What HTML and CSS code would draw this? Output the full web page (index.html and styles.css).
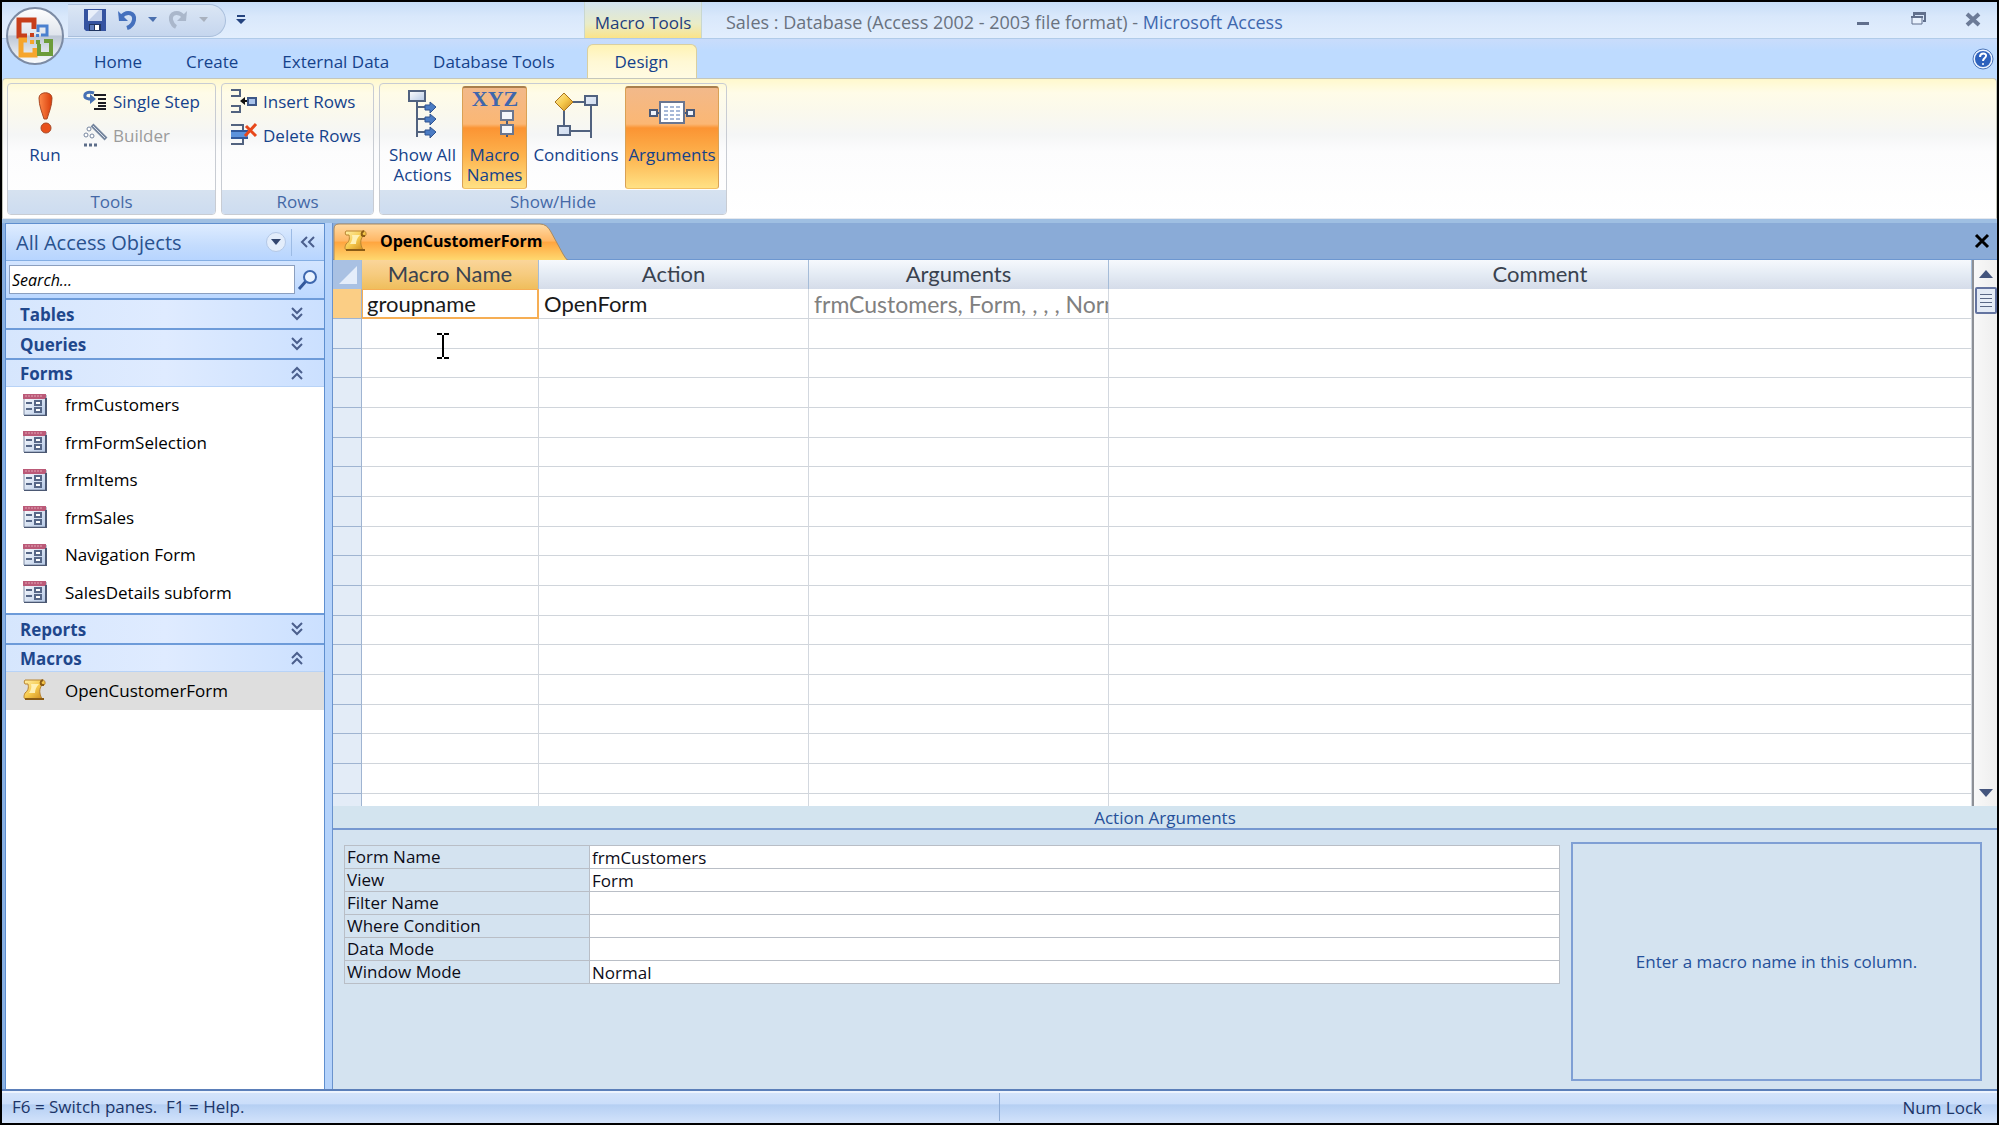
FILE: index.html
```html
<!DOCTYPE html>
<html lang="en">
<head>
    <meta charset="UTF-8">
    <title>Sales : Database - Microsoft Access</title>
    <link rel="stylesheet" href="styles.css">
</head>
<body>
    <!-- shared shapes -->
    <svg class="defs" width="0" height="0">
        <defs>
            <linearGradient id="gBlue" x1="0" y1="0" x2="1" y2="1"><stop offset="0" stop-color="#fff"/><stop offset="1" stop-color="#b4c8e6"/></linearGradient>
            <linearGradient id="gGold" x1="0" y1="0" x2="1" y2="1"><stop offset="0" stop-color="#fff0a8"/><stop offset=".5" stop-color="#f6c94c"/><stop offset="1" stop-color="#c98316"/></linearGradient>
            <linearGradient id="gOrb" x1="0" y1="0" x2="0" y2="1"><stop offset="0" stop-color="#fff"/><stop offset=".48" stop-color="#dfe4ec"/><stop offset=".5" stop-color="#bcc6d5"/><stop offset="1" stop-color="#fdfeff"/></linearGradient>
            <linearGradient id="gRun" x1="0" y1="0" x2="1" y2="0"><stop offset="0" stop-color="#ff8a4a"/><stop offset="1" stop-color="#d83c0a"/></linearGradient>
        </defs>
        <symbol id="form" viewBox="0 0 24 22">
            <path d="M1 1h22v20H1z" fill="url(#gBlue)" stroke="#7f8ca5" stroke-width="1"/>
            <path d="M0 0h23v5H0z" fill="#bb5a78"/><path d="M2 2h18" stroke="#e2a5b6" stroke-dasharray="2 1"/>
            <path d="M23 4v18H1" fill="none" stroke="#4b5873" stroke-width="2"/>
            <path d="M3 9h6M3 15h6" stroke="#566787" stroke-width="2"/>
            <path d="M12 7h6v4h-6zM12 14h6v4h-6z" fill="#fff" stroke="#566787" stroke-width="2"/>
        </symbol>
        <symbol id="scroll" viewBox="0 0 24 24">
            <path d="M2 2h18c2 0 3 4 1 5h-2c-3 4-3 8 0 14H3c-3 0-2-4-1-6 3-2 4-5 3-9H2c-1-1-1-3 0-4z" fill="url(#gGold)" stroke="#b98430" stroke-width="1"/>
            <path d="M20 2c-3 1-3 4-1 5h2" fill="none" stroke="#8a5c16" stroke-width="2"/>
            <path d="M2 21h19" fill="none" stroke="#8a5c16" stroke-width="2"/>
            <path d="M8 6h8c-3 3-4 6-4 9H6c2-3 3-6 2-9z" fill="#fff0b4"/>
        </symbol>
        <symbol id="down" viewBox="0 0 14 14"><path d="M2 1l5 5 5-5M2 7l5 5 5-5" fill="none" stroke="#4b5f8d" stroke-width="2"/></symbol>
        <symbol id="up" viewBox="0 0 14 14"><path d="M2 7l5-5 5 5M2 13l5-5 5 5" fill="none" stroke="#4b5f8d" stroke-width="2"/></symbol>
    </svg>

    <div class="window">
        <header class="titlebar">
            <div class="quick">
                <button aria-label="Save"><svg width="22" height="22" viewBox="0 0 22 22"><path d="M0 0h22v22H2l-2-2z" fill="#3553a0"/><path d="M4 1h14v11H4z" fill="#e9effa"/><path d="M15 1h3v11H4z" fill="#c3d0ea"/><path d="M5 15h12v7H5z" fill="#20345f"/><path d="M11 16h4v5h-4z" fill="#fff"/><path d="M6 16h4v5H6z" fill="#5f7cbd"/></svg></button>
                <button aria-label="Undo"><svg width="20" height="20" viewBox="0 0 20 20"><path d="M4 7c6-7 14-4 13 3-1 5-4 7-7 8" fill="none" stroke="#4470bd" stroke-width="4"/><path d="M1 1l1 10h9z" fill="#4470bd"/></svg></button>
                <button aria-label="Undo list"><svg width="9" height="6"><path d="M0 0h9L5 5z" fill="#4a6fae"/></svg></button>
                <button aria-label="Redo"><svg width="20" height="20" viewBox="0 0 20 20"><path d="M16 7C10 0 2 3 3 10c1 4 3 6 5 7" fill="none" stroke="#aab7cb" stroke-width="4"/><path d="M19 1l-1 10H9z" fill="#aab7cb"/></svg></button>
                <button aria-label="Redo list"><svg width="9" height="6"><path d="M0 0h9L5 5z" fill="#a9b1be"/></svg></button>
            </div>
            <button class="customize" aria-label="Customize"><svg width="10" height="10"><path d="M1 0h8v2H1zM0 4h10L5 9z" fill="#24437f"/></svg></button>
            <div class="context">Macro Tools</div>
            <h1>Sales : Database (Access 2002 - 2003 file format) - <span>Microsoft Access</span></h1>
            <div class="controls">
                <button aria-label="Minimize"><svg width="16" height="16"><path d="M2 10h12v3H2z" fill="#606f8c"/></svg></button>
                <button aria-label="Restore"><svg width="16" height="16"><path d="M4 4V1h11v8h-2M4 2h11" fill="none" stroke="#606f8c" stroke-width="2"/><path d="M2 5h10v7H2z" fill="#e8f1fd" stroke="#606f8c"/><path d="M1 4h12v2H1z" fill="#606f8c"/></svg></button>
                <button aria-label="Close"><svg width="16" height="16"><path d="M2 2l12 11M14 2L2 13" stroke="#6c7b97" stroke-width="4"/></svg></button>
            </div>
        </header>

        <nav class="tabs">
            <button>Home</button>
            <button>Create</button>
            <button>External Data</button>
            <button>Database Tools</button>
            <button class="active">Design</button>
            <button class="help" aria-label="Help"><svg width="24" height="24" viewBox="0 0 24 24"><circle cx="12" cy="12" r="10" fill="#eef5ff" stroke="#4b74b8" stroke-width="1"/><circle cx="12" cy="12" r="8" fill="#2e62bd"/><path d="M9 10c0-5 7-4 6-1 0 2-3 2-3 5" fill="none" stroke="#fff" stroke-width="2"/><circle cx="12" cy="17" r="1" fill="#fff"/></svg></button>
        </nav>

        <button class="orb" aria-label="Office Button">
            <svg width="60" height="60" viewBox="0 0 60 60">
                <circle cx="30" cy="30" r="28" fill="url(#gOrb)" stroke="#7c8ba4" stroke-width="2"/>
                <path d="M22 30h-8V14h15v9" fill="none" stroke="#c73e1b" stroke-width="5"/>
                <path d="M33 26v-6h9v9h-6" fill="none" stroke="#4a80cf" stroke-width="3"/>
                <path d="M22 34h-6v15h14v-7" fill="none" stroke="#f6a52c" stroke-width="5"/>
                <path d="M34 38v10h12V35h-7" fill="none" stroke="#6d9c3a" stroke-width="4"/>
                <path d="M25 27h4v4h-4z" fill="#c73e1b"/><path d="M31 28h3v3h-3z" fill="#4a80cf"/><path d="M25 34h4v4h-4z" fill="#f6a52c"/><path d="M31 34h4v4h-4z" fill="#6d9c3a"/>
            </svg>
        </button>

        <section class="ribbon">
            <div class="group tools">
                <div class="group-body">
                    <button class="big run"><svg width="40" height="50" viewBox="0 0 40 50"><path d="M14 9c0-7 13-7 13 0 0 8-3 14-5 21h-3c-2-7-5-13-5-21z" fill="url(#gRun)" stroke="#a94a26"/><circle cx="21" cy="39" r="5" fill="#e9511b" stroke="#a94a26"/></svg>Run</button>
                    <div class="stack">
                        <button><svg width="24" height="20" viewBox="0 0 24 20"><path d="M11 2C5 0 1 2 2 6c1 2 4 2 7 2" fill="none" stroke="#4670b4" stroke-width="3"/><path d="M7 3v10l6-5z" fill="#4670b4"/><path d="M11 4h12M15 8h8M15 12h8M15 15h8M11 18h12" stroke="#1c1c24" stroke-width="2"/></svg>Single Step</button>
                        <button disabled><svg width="24" height="24" viewBox="0 0 24 24"><path d="M9 2l14 14" stroke="#76869f" stroke-width="4"/><path d="M10 3l12 12" stroke="#d7dee9" stroke-width="1"/><g fill="#fff" stroke="#76869f"><circle cx="6" cy="6" r="2"/><circle cx="3" cy="12" r="2"/><circle cx="9" cy="13" r="2"/></g><path d="M1 22h3M6 22h3M11 22h3" stroke="#5c6d89" stroke-width="3"/></svg>Builder</button>
                    </div>
                </div>
                <h2>Tools</h2>
            </div>
            <div class="group rows">
                <div class="group-body">
                    <div class="stack">
                        <button><svg width="26" height="24" viewBox="0 0 26 24"><path d="M0 1h9v6H0M0 17h9v6H0" fill="none" stroke="#51627f" stroke-width="2"/><path d="M17 9h8v7h-8z" fill="#a9c3ea" stroke="#3d5787" stroke-width="2"/><path d="M11 12h5" stroke="#111" stroke-width="2"/><path d="M9 12l5-4v8z" fill="#111"/></svg>Insert Rows</button>
                        <button><svg width="26" height="24" viewBox="0 0 26 24"><path d="M0 2h12v6M0 21h12v-5" fill="none" stroke="#51627f" stroke-width="2"/><path d="M0 8h17v7H0z" fill="#5c92dc"/><path d="M0 8h17M0 15h17" stroke="#31589b" stroke-width="2"/><path d="M15 3l10 10M25 1L14 13" stroke="#e8481b" stroke-width="3"/></svg>Delete Rows</button>
                    </div>
                </div>
                <h2>Rows</h2>
            </div>
            <div class="group show">
                <div class="group-body">
                    <button class="big all"><svg width="40" height="50" viewBox="0 0 40 50"><path d="M14 12v36M14 18h12M14 30h12M14 43h12" fill="none" stroke="#51627f" stroke-width="2"/><path d="M6 2h16v10H6z" fill="url(#gBlue)" stroke="#51627f" stroke-width="2"/><path d="M22 16h5v-3l6 5-6 6v-3h-5zM22 28h5v-3l6 5-6 6v-3h-5zM22 41h5v-3l6 5-6 6v-3h-5z" fill="#4b7cc4" stroke="#2f538f"/></svg>Show All Actions</button>
                    <button class="big names pressed"><svg width="50" height="50" viewBox="0 0 50 50"><text x="25" y="17" text-anchor="middle" class="xyz">XYZ</text><path d="M37 28v20" stroke="#4a5a78" stroke-width="2"/><path d="M31 22h12v9H31zM31 36h12v9H31z" fill="#f4f6fb" stroke="#6a7690" stroke-width="2"/></svg>Macro Names</button>
                    <button class="big cond"><svg width="50" height="50" viewBox="0 0 50 50"><path d="M13 20v22h27M20 13h20v36" fill="none" stroke="#51627f" stroke-width="2"/><path d="M13 4l9 9-9 9-9-9z" fill="url(#gGold)" stroke="#a8741c" stroke-width="1"/><path d="M34 7h12v9H34zM7 37h12v9H7z" fill="url(#gBlue)" stroke="#51627f" stroke-width="2"/></svg>Conditions</button>
                    <button class="big args pressed"><svg width="50" height="50" viewBox="0 0 50 50"><path d="M4 24h42" stroke="#4a5a78" stroke-width="2"/><path d="M3 21h7v6H3zM40 21h7v6h-7z" fill="#eef3fb" stroke="#4a5a78" stroke-width="2"/><path d="M13 13h24v21H13z" fill="#fff" stroke="#6a7690" stroke-width="2"/><path d="M17 18h17M17 22h17M17 26h17M17 30h17" stroke="#4f72b0" stroke-dasharray="4 2"/></svg>Arguments</button>
                </div>
                <h2>Show/Hide</h2>
            </div>
        </section>

        <main>
            <aside class="nav-pane">
                <div class="nav-title">
                    <h2>All Access Objects</h2>
                    <button class="filter" aria-label="Filter"><svg width="10" height="6"><path d="M0 0h10L5 6z" fill="#33466f"/></svg></button>
                    <button class="collapse" aria-label="Collapse"><svg width="14" height="12"><path d="M6 1L1 6l5 5M13 1L8 6l5 5" fill="none" stroke="#4b5f8d" stroke-width="2"/></svg></button>
                </div>
                <div class="search">
                    <input type="text" placeholder="Search..." aria-label="Search">
                    <button aria-label="Find"><svg width="20" height="20"><path d="M1 19l8-9" stroke="#33589b" stroke-width="3"/><circle cx="12" cy="7" r="6" fill="#eaf3ff" stroke="#3d67ae" stroke-width="2"/></svg></button>
                </div>
                <button class="section">Tables<svg width="14" height="14"><use href="#down"/></svg></button>
                <button class="section">Queries<svg width="14" height="14"><use href="#down"/></svg></button>
                <button class="section open">Forms<svg width="14" height="14"><use href="#up"/></svg></button>
                <ul>
                    <li><svg width="24" height="22"><use href="#form"/></svg>frmCustomers</li>
                    <li><svg width="24" height="22"><use href="#form"/></svg>frmFormSelection</li>
                    <li><svg width="24" height="22"><use href="#form"/></svg>frmItems</li>
                    <li><svg width="24" height="22"><use href="#form"/></svg>frmSales</li>
                    <li><svg width="24" height="22"><use href="#form"/></svg>Navigation Form</li>
                    <li><svg width="24" height="22"><use href="#form"/></svg>SalesDetails subform</li>
                </ul>
                <button class="section">Reports<svg width="14" height="14"><use href="#down"/></svg></button>
                <button class="section open">Macros<svg width="14" height="14"><use href="#up"/></svg></button>
                <ul>
                    <li class="selected"><svg width="24" height="24"><use href="#scroll"/></svg>OpenCustomerForm</li>
                </ul>
            </aside>

            <section class="document">
                <div class="doc-tabs">
                    <button class="doc-tab">
                        <svg class="tab-shape" width="236" height="38" viewBox="0 0 236 38">
                            <defs><linearGradient id="gTab" x1="0" y1="0" x2="0" y2="1"><stop offset="0" stop-color="#ffdba6"/><stop offset=".45" stop-color="#ffb765"/><stop offset=".5" stop-color="#ffa640"/><stop offset="1" stop-color="#ffdb72"/></linearGradient></defs>
                            <path d="M1 38V6q0-5 5-5h201q7 0 11 8l12 22q3 6 6 7z" fill="url(#gTab)" stroke="#a98a60" stroke-width="1"/>
                        </svg>
                        <svg width="24" height="24"><use href="#scroll"/></svg>
                        <span>OpenCustomerForm</span>
                    </button>
                    <button class="doc-close" aria-label="Close document"><svg width="14" height="12"><path d="M1 0l12 12M13 0L1 12" stroke="#000" stroke-width="3"/></svg></button>
                </div>

                <div class="grid-wrap">
                    <div class="grid">
                        <table>
                            <thead>
                                <tr>
                                    <th class="corner"><svg width="18" height="18"><path d="M18 0v18H0z" fill="#e4edfa"/></svg></th>
                                    <th class="name current">Macro Name</th>
                                    <th class="action">Action</th>
                                    <th class="arguments">Arguments</th>
                                    <th>Comment</th>
                                </tr>
                            </thead>
                            <tbody id="macro-rows">
                                <tr>
                                    <td class="current"></td>
                                    <td class="editing"><input type="text" value="groupname" aria-label="Macro Name"></td>
                                    <td>OpenForm</td>
                                    <td class="muted">frmCustomers, Form, , , , Normal</td>
                                    <td></td>
                                </tr>
                            </tbody>
                        </table>
                        <svg class="cursor" width="12" height="26"><path d="M0 1h5M7 1h5M0 25h5M7 25h5M6 2v22" stroke="#000" stroke-width="2"/></svg>
                    </div>
                    <div class="scrollbar">
                        <button aria-label="Scroll up"><svg width="14" height="8"><path d="M7 0l7 8H0z" fill="#44557d"/></svg></button>
                        <div class="thumb"></div>
                        <button class="last" aria-label="Scroll down"><svg width="14" height="8"><path d="M0 0h14L7 8z" fill="#44557d"/></svg></button>
                    </div>
                </div>

                <h3>Action Arguments</h3>
                <div class="props">
                    <table>
                        <tr><th><label for="form-name">Form Name</label></th><td><input id="form-name" value="frmCustomers"></td></tr>
                        <tr><th><label for="view">View</label></th><td><input id="view" value="Form"></td></tr>
                        <tr><th><label for="filter-name">Filter Name</label></th><td><input id="filter-name"></td></tr>
                        <tr><th><label for="where">Where Condition</label></th><td><input id="where"></td></tr>
                        <tr><th><label for="data-mode">Data Mode</label></th><td><input id="data-mode"></td></tr>
                        <tr><th><label for="window-mode">Window Mode</label></th><td><input id="window-mode" value="Normal"></td></tr>
                    </table>
                    <p class="hint">Enter a macro name in this column.</p>
                </div>
            </section>
        </main>

        <footer>
            <span class="keys">F6 = Switch panes. &nbsp;F1 = Help.</span>
            <span class="lock">Num Lock</span>
        </footer>
    </div>

    <script>
        // blank rows under the first macro
        const rows = document.getElementById('macro-rows');
        for (let i = 0; i < 17; i++) {
            const tr = document.createElement('tr');
            tr.innerHTML = '<td></td><td></td><td></td><td></td><td></td>';
            rows.appendChild(tr);
        }
    </script>
</body>
</html>
```
FILE: styles.css
```css
* {
    box-sizing: border-box;
}

body {
    margin: 0;
    background: #000;
    font-family: "Open Sans", "Noto Sans", sans-serif;
    font-size: 17px;
    color: #15428b;
}

button, input {
    font: inherit;
    color: inherit;
    background: none;
    border: none;
    padding: 0;
    margin: 0;
}

button {
    display: flex;
    align-items: center;
    justify-content: center;
    white-space: nowrap;
}

svg {
    display: block;
    flex: none;
    overflow: visible;
}

h1, h2, h3, p, ul {
    margin: 0;
    padding: 0;
    font-weight: normal;
}

.defs {
    position: absolute;
}

.window {
    position: relative;
    display: flex;
    flex-direction: column;
    height: 100vh;
    border: 2px solid #000;
    background: #bfdbff;
}

/* title bar */
.titlebar {
    display: flex;
    align-items: center;
    height: 37px;
    padding-left: 66px;
    background: linear-gradient(#c7ddf7, #d9e8fb 40%, #e2eefd);
    border-bottom: 1px solid #b0cbe9;
}

.quick {
    display: flex;
    align-items: center;
    width: 158px;
    height: 33px;
    padding-left: 16px;
    border: 1px solid #a9bedb;
    border-left: none;
    border-radius: 0 17px 17px 0;
    background: linear-gradient(#dbe6f5, #c5d6ee);
}

.quick button {
    margin-right: 11px;
}

.customize {
    width: 30px;
}

.context {
    width: 118px;
    height: 100%;
    margin-left: 328px;
    padding-top: 4px;
    line-height: 34px;
    text-align: center;
    color: #1e3d7b;
    border: 1px solid #c9d7cf;
    border-width: 0 1px;
    background: linear-gradient(#d3e3ef, #e9ecc8 60%, #fbe388);
}

h1 {
    flex: 1;
    margin-left: 24px;
    padding-top: 3px;
    font-size: 18px;
    color: #69727f;
    white-space: nowrap;
}

h1 span {
    color: #3f68ae;
}

.controls {
    display: flex;
    gap: 39px;
    padding-right: 16px;
}

.orb {
    position: absolute;
    left: 3px;
    top: 4px;
}

/* ribbon tabs */
.tabs {
    display: flex;
    align-items: flex-end;
    height: 39px;
    padding-left: 70px;
    background: linear-gradient(#c9dcfb, #bedbff 30%);
}

.tabs button {
    height: 34px;
    padding: 0 22px;
}

.tabs .active {
    width: 110px;
    margin-left: 10px;
    border: 1px solid #d9cfa0;
    border-bottom: none;
    border-radius: 6px 6px 0 0;
    background: linear-gradient(#fff3b4, #fff8d4 50%, #fffbe3);
}

.tabs .help {
    margin-left: auto;
    padding: 0 2px;
    height: 38px;
}

/* ribbon */
.ribbon {
    display: flex;
    gap: 5px;
    height: 141px;
    padding: 4px 4px 3px;
    border: 1px solid #c4c6bc;
    border-bottom-color: #e4e8ee;
    border-radius: 4px 4px 0 0;
    background: linear-gradient(#fff8cc, #fffce8 10%, #fbf9ec 22%, #f5f6f6 40%, #fcfcfd 52%, #fff);
}

.group {
    display: flex;
    flex-direction: column;
    border: 1px solid #c8ccd3;
    border-radius: 4px;
    overflow: hidden;
}

.tools {
    width: 209px;
}

.rows {
    width: 153px;
}

.show {
    width: 348px;
}

.group-body {
    display: flex;
    flex: 1;
    padding: 0 3px;
}

.group h2 {
    height: 24px;
    line-height: 24px;
    font-size: 17px;
    text-align: center;
    color: #4468a6;
    background: linear-gradient(#d6e2f0, #cddcf0);
}

.big {
    flex-direction: column;
    justify-content: flex-start;
    height: 103px;
    margin-top: 2px;
    padding: 2px 0 0;
    gap: 6px;
    line-height: 20px;
    white-space: normal;
    border: 1px solid transparent;
    border-radius: 3px;
}

.run {
    width: 68px;
}

.all {
    width: 79px;
}

.names {
    width: 65px;
}

.cond {
    width: 98px;
}

.args {
    width: 94px;
}

.pressed {
    border-color: #a97f4c #d9a155 #f3c063;
    border-top-width: 2px;
    padding-top: 1px;
    background: linear-gradient(#f2b98a, #fbb774 36%, #fb9433 40%, #fdb34e 68%, #ffe184);
}

.xyz {
    font: bold 22px "Liberation Serif", serif;
    fill: #3f66ac;
}

.stack {
    display: flex;
    flex-direction: column;
    align-items: flex-start;
    padding-left: 4px;
}

.stack button {
    height: 34px;
    gap: 6px;
}

.rows .stack {
    padding-left: 6px;
}

button:disabled {
    color: #9b9b9b;
}

/* main area */
main {
    display: flex;
    flex: 1;
    min-height: 0;
    padding-left: 3px;
    border-top: 4px solid #9fbfe2;
    border-bottom: 2px solid #5b7fb9;
    background: linear-gradient(90deg, #84acdf, #b5d3fb 1%);
}

.nav-pane {
    width: 320px;
    border: 1px solid #5f8fcf;
    border-bottom: none;
    background: #fff;
    overflow: hidden;
}

.nav-title {
    display: flex;
    align-items: center;
    height: 37px;
    padding-left: 10px;
    border-bottom: 1px solid #84aee3;
    background: linear-gradient(#deecff, #c4dcfd 60%, #b7d5ff);
}

.nav-title h2 {
    flex: 1;
    font-size: 20px;
    color: #29528f;
}

.filter {
    width: 20px;
    height: 20px;
    border: 1px solid #b4c8e6;
    border-radius: 10px;
    background: #e3edfb;
}

.collapse {
    width: 33px;
    height: 27px;
    margin-left: 5px;
    border-left: 1px solid #9cbbe5;
}

.search {
    display: flex;
    gap: 3px;
    height: 37px;
    padding: 4px 3px;
    background: linear-gradient(#d3e5ff, #bcd8ff);
}

.search input {
    width: 286px;
    height: 29px;
    padding-left: 2px;
    border: 1px solid #8b9fbf;
    background: #fff;
    color: #000;
    font-size: 16px;
    font-style: italic;
}

.search input::placeholder {
    color: #000;
    opacity: 1;
}

.section {
    justify-content: space-between;
    width: 100%;
    height: 30px;
    padding: 0 20px 0 14px;
    font-weight: bold;
    color: #1f478c;
    border-top: 2px solid #6d9bd9;
    background: linear-gradient(90deg, #d6e6fd, #dfebff 50%, #cbe0ff);
}

.section.open {
    height: 29px;
    border-bottom: 1px solid #b8d3f7;
}

.nav-pane ul {
    list-style: none;
    padding-bottom: 1px;
}

.nav-pane li {
    display: flex;
    align-items: center;
    gap: 18px;
    height: 37px;
    padding: 0 0 2px 17px;
    color: #000;
}

.nav-pane li:nth-child(even), .nav-pane .selected {
    height: 38px;
}

.nav-pane .selected {
    background: #dedede;
}

/* document */
.document {
    display: flex;
    flex: 1;
    flex-direction: column;
    min-width: 0;
    margin-left: 7px;
    border-left: 1px solid #6a93cd;
    background: #d4e3f0;
}

.doc-tabs {
    display: flex;
    justify-content: space-between;
    height: 37px;
    border-bottom: 1px solid #6d97d0;
    background: #8aabd7;
}

.doc-tab {
    position: relative;
    justify-content: flex-start;
    gap: 12px;
    width: 236px;
    padding-left: 11px;
    font-weight: bold;
    font-size: 16px;
    color: #000;
}

.doc-tab > * {
    position: relative;
}

.doc-tab .tab-shape {
    position: absolute;
    left: 0;
    top: 0;
}

.doc-close {
    width: 30px;
}

.grid-wrap {
    display: flex;
    flex: 1;
    min-height: 0;
}

.grid {
    position: relative;
    flex: 1;
    overflow: hidden;
    background: #fff;
}

.grid table {
    width: 100%;
    border-collapse: separate;
    border-spacing: 0;
    table-layout: fixed;
    font-family: Lato, "Open Sans", sans-serif;
    font-size: 22px;
    color: #1a1a1a;
}

.grid th {
    height: 29px;
    padding: 0 0 2px;
    font-weight: normal;
    line-height: 26px;
    color: #39424f;
    border-right: 1px solid #a5bcd8;
    background: linear-gradient(#f6f9fd, #e4ebf4 50%, #d5dce9);
}

.grid .corner {
    width: 29px;
    background: #a9c1e3;
}

.corner svg {
    margin: 2px 0 0 6px;
}

.grid .name {
    width: 177px;
}

.grid .action {
    width: 270px;
}

.grid .arguments {
    width: 300px;
}

.grid th.current {
    background: linear-gradient(#fad59a, #f6cb7e 50%, #efbe5c);
}

.grid td {
    height: 30px;
    padding: 0 0 0 5px;
    line-height: 28px;
    white-space: nowrap;
    overflow: hidden;
    border-right: 1px solid #d3d8df;
    border-bottom: 1px solid #d0d5db;
}

.grid tr:nth-child(3n) td {
    height: 29px;
}

.grid td:first-child {
    background: #e3ecf7;
    border-color: #9fb4d1;
}

.grid td.current {
    background: #fbce85;
}

.grid td.editing {
    border: 2px solid #f6ae54;
    border-width: 1px 2px 2px 1px;
    padding-left: 4px;
}

.editing input {
    display: block;
    width: 100%;
    height: 26px;
}

.grid .muted {
    font-size: 23px;
    color: #808080;
}

.cursor {
    position: absolute;
    left: 104px;
    top: 73px;
}

.scrollbar {
    display: flex;
    flex-direction: column;
    width: 25px;
    border-left: 2px solid #8d9096;
    background: linear-gradient(90deg, #f8f8f8, #eeeeee);
}

.scrollbar button {
    height: 27px;
}

.scrollbar .last {
    margin-top: auto;
}

.thumb {
    height: 27px;
    margin-left: 1px;
    border: 2px solid #6474a0;
    border-radius: 2px;
    background: repeating-linear-gradient(#5a6886 0 1px, #e8eef8 1px 4px) center / 12px 13px no-repeat #e3eaf5;
}

h3 {
    height: 24px;
    font-size: 17px;
    line-height: 24px;
    text-align: center;
    color: #25509a;
    background: #d3e4ef;
    border-bottom: 2px solid #7698d0;
}

.props {
    display: flex;
    align-items: flex-start;
    gap: 11px;
    height: 259px;
    padding: 12px 15px 8px 11px;
}

.props table {
    flex: 1;
    margin-top: 3px;
    border-collapse: collapse;
    color: #0c0c18;
}

.props th, .props td {
    height: 23px;
    padding: 0 0 0 2px;
    line-height: 20px;
    text-align: left;
    font-weight: normal;
    border: 1px solid #b9bec6;
}

.props th {
    width: 245px;
}

.props td {
    background: #fff;
}

.props input {
    display: block;
    width: 100%;
    height: 22px;
}

.hint {
    display: flex;
    align-items: center;
    justify-content: center;
    width: 411px;
    height: 239px;
    border: 2px solid #7f9fd4;
    color: #25509a;
}

/* status bar */
footer {
    display: flex;
    align-items: center;
    height: 32px;
    padding-bottom: 2px;
    border-top: 2px solid #edf4fe;
    background: linear-gradient(#d3e3fa, #cbdefa 35%, #b5cff3 40%, #d3e3fb);
    color: #1c3568;
}

.keys {
    width: 50%;
    padding-left: 10px;
    border-right: 1px solid #8facd6;
    line-height: 28px;
    white-space: pre;
}

.lock {
    margin-left: auto;
    padding-right: 15px;
}
```
